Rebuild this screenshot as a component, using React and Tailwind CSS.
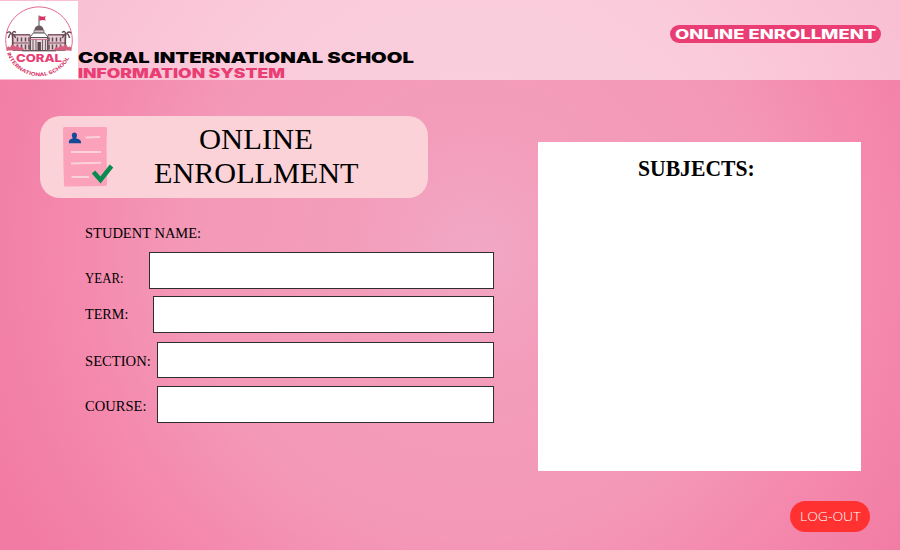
import { useLayoutEffect, useRef, useState } from "react";

// Stretches a single line of text horizontally so that it fills `width` pixels.
function FitText({ width, className = "", children }) {
  const ref = useRef(null);
  const [scale, setScale] = useState(1);
  useLayoutEffect(() => {
    setScale(width / ref.current.offsetWidth);
  }, [width]);
  return (
    <span className="flex" style={{ width }}>
      <span
        ref={ref}
        className={`shrink-0 origin-left whitespace-nowrap ${className}`}
        style={{ transform: `scaleX(${scale})` }}
      >
        {children}
      </span>
    </span>
  );
}

function SchoolLogo() {
  const windows = [17.5, 21.5, 25.5, 29, 49, 52.5, 56.5, 60.5];
  return (
    <svg viewBox="0 0 78 78" className="block h-[78px] w-[78px] bg-white">
      <path d="M7.500 50A33.300 33.300 0 1 1 70.500 50" fill="none" stroke="#e0577f" strokeWidth="0.9" />
      <path d="M39 25V14.500" stroke="#444" strokeWidth="0.9" />
      <path d="M39.300 15l3.500 .8 3.200-.6-1.200 2 1 2.400-3-.6-3.500.8z" fill="#dc2f62" />
      <path d="M34.500 29c0-6 9-6 9 0z" fill="#6e5961" />
      <path d="M34 29.200h10v3H34z" fill="#d8c4ca" stroke="#55464c" strokeWidth="0.6" />
      <path d="M29.500 36.500l4-4.500h11l4 4.500z" fill="#fff" stroke="#453c40" strokeWidth="0.9" />
      <path d="M13 33.500h17v16H13zM48 33.500h17v16H48z" fill="#e9cbd4" stroke="#76616a" strokeWidth="0.9" />
      <path d="M13 34h17M48 34h17M13 42h17M48 42h17" stroke="#7c4b5c" strokeWidth="1.100" />
      {windows.map((x) => (
        <path key={x} d={`M${x} 36.500v4M${x} 43.400v5`} stroke="#5c4b52" strokeWidth="1.500" />
      ))}
      <path d="M30.500 36.500h17v13h-17z" fill="#ead5dc" stroke="#54484d" strokeWidth="0.9" />
      <path d="M33 38v11M36 38v11M42.500 38v11M45.500 38v11" stroke="#75656b" strokeWidth="1.100" />
      <path d="M37.500 41h3.400v8.500h-3.400z" fill="#54474c" />
      <path d="M29.500 38.500h19" stroke="#d1728e" strokeWidth="0.9" />
      <g fill="none" stroke="#66464f" strokeWidth="1.400">
        <path d="M12 48c1-5 .8-9 .2-15M8.500 37c1-4 2-5 3.500-4M11 32c-2-2-3-1-4 0M12 33c1-3 2-3 4-1.500M12 33c2 0 3 2 3.500 4" />
        <path d="M66 48c-1-5-.8-9-.2-15M69.500 37c-1-4-2-5-3.500-4M67 32c2-2 3-1 4 0M66 33c-1-3-2-3-4-1.500M66 33c-2 0-3 2-3.500 4" />
      </g>
      <path d="M6.500 49.500c0-4 2-5 3.500-3 1.500-4 4-3 5-.5 2-3 4-1 4.500 1 2-2 4-.5 4.500 2.500zM71.500 49.500c0-4-2-5-3.500-3-1.500-4-4-3-5-.5-2-3-4-1-4.500 1-2-2-4-.5-4.500 2.500z" fill="#d4607f" />
      <path d="M22 49.900h34" stroke="#61494f" strokeWidth="0.9" />
      <text x="16" y="60.500" textLength="46" lengthAdjust="spacingAndGlyphs" className="fill-[#e93d74] font-['Inter',sans-serif] text-[11px] font-extrabold">
        CORAL
      </text>
      <path id="logo-arc" d="M7 52A34 34 0 0 0 71.500 52" fill="none" />
      <text className="fill-[#d83568] font-['Inter',sans-serif] text-[5px] font-bold">
        <textPath href="#logo-arc" textLength="79" lengthAdjust="spacingAndGlyphs">
          INTERNATIONAL SCHOOL
        </textPath>
      </text>
    </svg>
  );
}

function FormIcon() {
  return (
    <svg viewBox="0 0 52 62" className="block h-[62px] w-[52px] shrink-0">
      <path d="M1 2.500Q1 1 2.500 1L43.500 1Q45 1 45 3L44.500 22 45 58Q45 60 43.500 60L3 60.500Q2 60.500 2 58L1.500 40Z" fill="#fba1b9" />
      <path d="M7 17.200c-.7-2.800 1.200-4.200 3.500-4.600.6-1-.7-1.900-.7-3.200 0-3.800 5.200-3.800 5.200 0 0 1.300-1 2.200-.6 3.200 2.800.4 5.100 1.800 4.600 4.600z" fill="#174a98" />
      <g stroke="#fbd2d9" strokeWidth="2">
        <path d="M23.500 11.500l14.500-.6M9 26h30M9 37.500l30-.8M9.500 51h17.500" />
      </g>
      <path d="M31.500 46l7 8L49.500 40" fill="none" stroke="#088b50" strokeWidth="4.500" />
    </svg>
  );
}

const fields = [
  { label: "YEAR:", labelWidth: 39, row: "mt-[9px] h-[37px]", labelPos: "pt-[16px]", input: "w-[345px]" },
  { label: "TERM:", labelWidth: 43, row: "mt-[7px] h-[37px]", labelPos: "pt-[8px]", input: "w-[341px]" },
  { label: "SECTION:", labelWidth: 66, row: "mt-[9px] h-[36px]", labelPos: "pt-[9px]", input: "w-[337px]" },
  { label: "COURSE:", labelWidth: 61, row: "mt-[8px] h-[37px]", labelPos: "pt-[10px]", input: "w-[337px]" },
];

export default function App() {
  return (
    <div className="flex h-[550px] w-[900px] flex-col overflow-hidden bg-[radial-gradient(circle_at_475px_250px,#f1a8c4_0px,#f39dbb_120px,#f498b7_290px,#f489ad_400px,#f27ba3_530px)] text-black">
      <header className="flex h-20 shrink-0 justify-between bg-white/50">
        <div className="flex">
          <div className="pt-px">
            <SchoolLogo />
          </div>
          <div className="-mb-px flex flex-col justify-end font-['Inter',sans-serif] font-black">
            <FitText width={336} className="text-[14.5px] leading-4">CORAL INTERNATIONAL SCHOOL</FitText>
            <FitText width={207} className="text-[12.5px] leading-[15px] text-[#e93d74]">INFORMATION SYSTEM</FitText>
          </div>
        </div>
        <div className="mt-[25px] mr-[19px] flex h-[18px] w-[211px] justify-center rounded-full bg-[#e93d74] font-['Inter',sans-serif] font-extrabold text-white">
          <FitText width={202} className="text-[12.5px] leading-[19px]">ONLINE ENROLLMENT</FitText>
        </div>
      </header>

      <main className="flex grow">
        <section className="w-[498px] shrink-0 pt-9 pl-10 font-['Liberation_Serif',serif]">
          <div className="flex h-[82px] w-[388px] rounded-[20px] bg-[#fbd2d8] pt-[6px] pl-[22px]">
            <div className="pt-1">
              <FormIcon />
            </div>
            <h1 className="ml-[40px] flex w-[204px] flex-col items-center text-[29px] leading-[34px]">
              <FitText width={114}>ONLINE</FitText>
              <FitText width={205}>ENROLLMENT</FitText>
            </h1>
          </div>

          <div className="mt-[25px] ml-[45px] h-5 text-[15.500px] leading-5">
            <FitText width={116}>STUDENT NAME:</FitText>
          </div>
          {fields.map((f) => (
            <label key={f.label} className={`ml-[45px] flex w-[408px] justify-between text-[15.500px] leading-5 ${f.row}`}>
              <span className={f.labelPos}>
                <FitText width={f.labelWidth}>{f.label}</FitText>
              </span>
              <input type="text" className={`-mr-px h-full border border-[#2e2e2e] bg-white px-2 outline-none ${f.input}`} />
            </label>
          ))}
        </section>

        <aside className="ml-10 flex w-[332px] flex-col pt-[62px]">
          <div className="flex h-[329px] w-[323px] justify-center bg-white pr-[7px] font-['Liberation_Serif',serif] font-bold">
            <h2 className="pt-[12px] text-[23.500px] leading-7">
              <FitText width={117}>SUBJECTS:</FitText>
            </h2>
          </div>
          <button type="button" className="mt-[30px] flex h-[31px] w-20 justify-center self-end rounded-full bg-[#ff3131] font-['Open_Sans',sans-serif] font-light text-white">
            <FitText width={60} className="text-[13.500px] leading-[30px]">LOG-OUT</FitText>
          </button>
        </aside>
      </main>
    </div>
  );
}
